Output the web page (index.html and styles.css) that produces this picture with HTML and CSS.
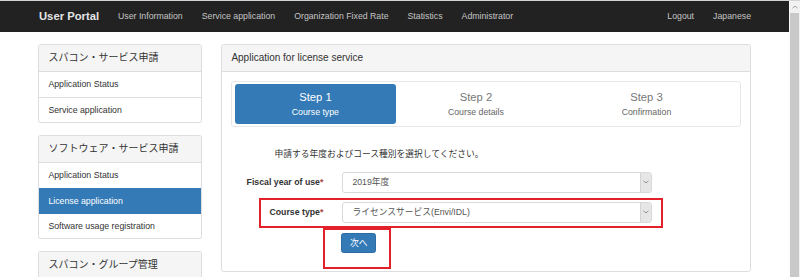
FILE: index.html
```html
<!DOCTYPE html>
<html lang="ja">
<head>
<meta charset="utf-8">
<title>User Portal</title>
<link rel="stylesheet" href="styles.css">
</head>
<body>
<div class="page">
  <nav class="navbar">
    <span class="brand">User Portal</span>
    <ul class="nav">
      <li>User Information</li>
      <li>Service application</li>
      <li>Organization Fixed Rate</li>
      <li>Statistics</li>
      <li>Administrator</li>
    </ul>
    <ul class="nav nav-right">
      <li>Logout</li>
      <li>Japanese</li>
    </ul>
  </nav>

  <div class="container">
    <aside class="sidebar">
      <div class="panel">
        <div class="panel-heading">スパコン・サービス申請</div>
        <div class="list-item">Application Status</div>
        <div class="list-item">Service application</div>
      </div>
      <div class="panel">
        <div class="panel-heading">ソフトウェア・サービス申請</div>
        <div class="list-item">Application Status</div>
        <div class="list-item active">License application</div>
        <div class="list-item">Software usage registration</div>
      </div>
      <div class="panel">
        <div class="panel-heading">スパコン・グループ管理</div>
      </div>
    </aside>

    <main class="main">
      <div class="panel">
        <div class="panel-heading main-heading">Application for license service</div>
        <div class="panel-body">
          <div class="steps">
            <div class="step active">
              <div class="step-title">Step 1</div>
              <div class="step-sub">Course type</div>
            </div>
            <div class="step">
              <div class="step-title">Step 2</div>
              <div class="step-sub">Course details</div>
            </div>
            <div class="step">
              <div class="step-title">Step 3</div>
              <div class="step-sub">Confirmation</div>
            </div>
          </div>

          <p class="instruction">申請する年度およびコース種別を選択してください。</p>

          <div class="form">
            <div class="form-row">
              <label class="form-label">Fiscal year of use<span class="req">*</span></label>
              <div class="select">
                <span class="select-value">2019年度</span>
                <span class="select-arrow"><svg width="6" height="4" viewBox="0 0 6 4"><path d="M0.5 0.8 L3 3 L5.5 0.8" fill="none" stroke="#8a8a8a" stroke-width="0.9"/></svg></span>
              </div>
            </div>
            <div class="form-row">
              <label class="form-label">Course type<span class="req">*</span></label>
              <div class="select">
                <span class="select-value">ライセンスサービス(Envi/IDL)</span>
                <span class="select-arrow"><svg width="6" height="4" viewBox="0 0 6 4"><path d="M0.5 0.8 L3 3 L5.5 0.8" fill="none" stroke="#8a8a8a" stroke-width="0.9"/></svg></span>
              </div>
            </div>
            <div class="button-row">
              <button class="btn" type="button">次へ</button>
            </div>
          </div>
        </div>
      </div>
    </main>
  </div>

  <div class="mark mark-select"></div>
  <div class="mark mark-button"></div>
</div>

<div class="scrollbar">
  <div class="scroll-up"><svg width="6" height="4" viewBox="0 0 6 4"><path d="M0.5 3.2 L3 1 L5.5 3.2" fill="none" stroke="#a0a0a0" stroke-width="1"/></svg></div>
  <div class="scroll-thumb"></div>
</div>
</body>
</html>
```

FILE: styles.css
```css
html {
  overflow: hidden;
}

body {
  margin: 0;
  font-family: "Liberation Sans", "Noto Sans CJK JP", sans-serif;
  font-size: 8.75px;
  line-height: 12.5px;
  color: #333;
  background: #fff;
  border-top: 1px solid #d4d4d4;
}

.page {
  width: 789px;
  position: relative;
}

/* Navbar */
.navbar {
  height: 31px;
  background: #222;
  display: flex;
  align-items: center;
  padding: 0 38px 0 39px;
}

.brand {
  font-weight: bold;
  font-size: 11.25px;
  color: #e4e4e4;
  margin-right: 19px;
}

.nav {
  list-style: none;
  margin: 0;
  padding: 0;
  display: flex;
  gap: 19px;
  color: #c4c4c4;
}

.nav-right {
  margin-left: auto;
}

/* Layout */
.container {
  display: grid;
  grid-template-columns: 164px 530px;
  column-gap: 19px;
  padding: 12px 38px 0 38px;
  align-items: start;
}

/* Panels */
.panel {
  border: 1px solid #ddd;
  border-radius: 2.5px;
  background: #fff;
  margin-bottom: 12px;
  overflow: hidden;
}

.panel-heading {
  background: #f5f5f5;
  border-bottom: 1px solid #ddd;
  height: 26px;
  line-height: 26px;
  padding: 0 9.4px;
  font-size: 10px;
  color: #333;
}

.list-item {
  height: 24px;
  line-height: 24px;
  padding: 0 9.4px;
  border-top: 1px solid #ddd;
  color: #333;
}

.panel-heading + .list-item {
  border-top: 0;
  height: 25px;
}

.list-item.active {
  background: #337ab7;
  border-top-color: #337ab7;
  color: #fff;
}

.list-item.active + .list-item {
  border-top-color: #337ab7;
}

/* Main panel */
.main .panel {
  margin-bottom: 0;
}

.panel-body {
  padding: 9px 9.4px 18px 9.4px;
}

.steps {
  display: grid;
  grid-template-columns: 161px 160px 1fr;
  border: 1px solid #e6e6e6;
  border-radius: 3px;
  padding: 2px 2.5px;
}

.step {
  height: 40px;
  box-sizing: border-box;
  padding-top: 6px;
  text-align: center;
  border-radius: 3px;
  color: #777;
}

.step.active {
  background: #337ab7;
  color: #fff;
}

.step-title {
  font-size: 11.25px;
  line-height: 14px;
}

.step-sub {
  margin-top: 2px;
  line-height: 12px;
  color: #666;
}

.step.active .step-sub {
  color: #fff;
}

.instruction {
  margin: 21px 0 0 43px;
  line-height: 12.5px;
}

/* Form */
.form {
  margin-top: 11px;
}

.form-row {
  display: grid;
  grid-template-columns: 92px 310px;
  column-gap: 19px;
  align-items: center;
  margin-bottom: 9px;
}

.form-label {
  text-align: right;
  font-weight: bold;
  color: #333;
}

.req {
  color: #a94442;
}

.select {
  height: 21px;
  box-sizing: border-box;
  border: 1px solid #d9d9d9;
  border-radius: 3px;
  display: flex;
  align-items: center;
  background: #fff;
  overflow: hidden;
}

.select-value {
  flex: 1;
  padding-left: 9px;
  color: #555;
  font-size: 8.75px;
}

.select-arrow {
  width: 10px;
  height: 100%;
  background: #e6e6e6;
  border-left: 1px solid #d4d4d4;
  display: flex;
  align-items: center;
  justify-content: center;
}

.button-row {
  margin-left: 110px;
  padding-top: 1px;
}

.btn {
  font-family: "Liberation Sans", "Noto Sans CJK JP", sans-serif;
  font-size: 8.75px;
  line-height: 12px;
  height: 20px;
  padding: 0 7.5px;
  border: 1px solid #2e6da4;
  border-radius: 2.5px;
  background: #337ab7;
  color: #fff;
}

/* Annotation marks */
.mark {
  position: absolute;
  box-sizing: border-box;
  border: 2px solid #e3212b;
}

.mark-select {
  left: 259px;
  top: 197px;
  width: 404px;
  height: 30px;
}

.mark-button {
  left: 323px;
  top: 227px;
  width: 68px;
  height: 41px;
}

/* Fake scrollbar */
.scrollbar {
  position: fixed;
  top: 1px;
  right: 0;
  bottom: 0;
  width: 11px;
  background: #f1f1f1;
  border-left: 1px solid #fafafa;
  box-sizing: border-box;
}

.scroll-up {
  height: 11px;
  display: flex;
  align-items: center;
  justify-content: center;
}

.scroll-thumb {
  position: absolute;
  top: 12px;
  left: 0;
  right: 1px;
  bottom: 0;
  background: #c9c9c9;
}
```
